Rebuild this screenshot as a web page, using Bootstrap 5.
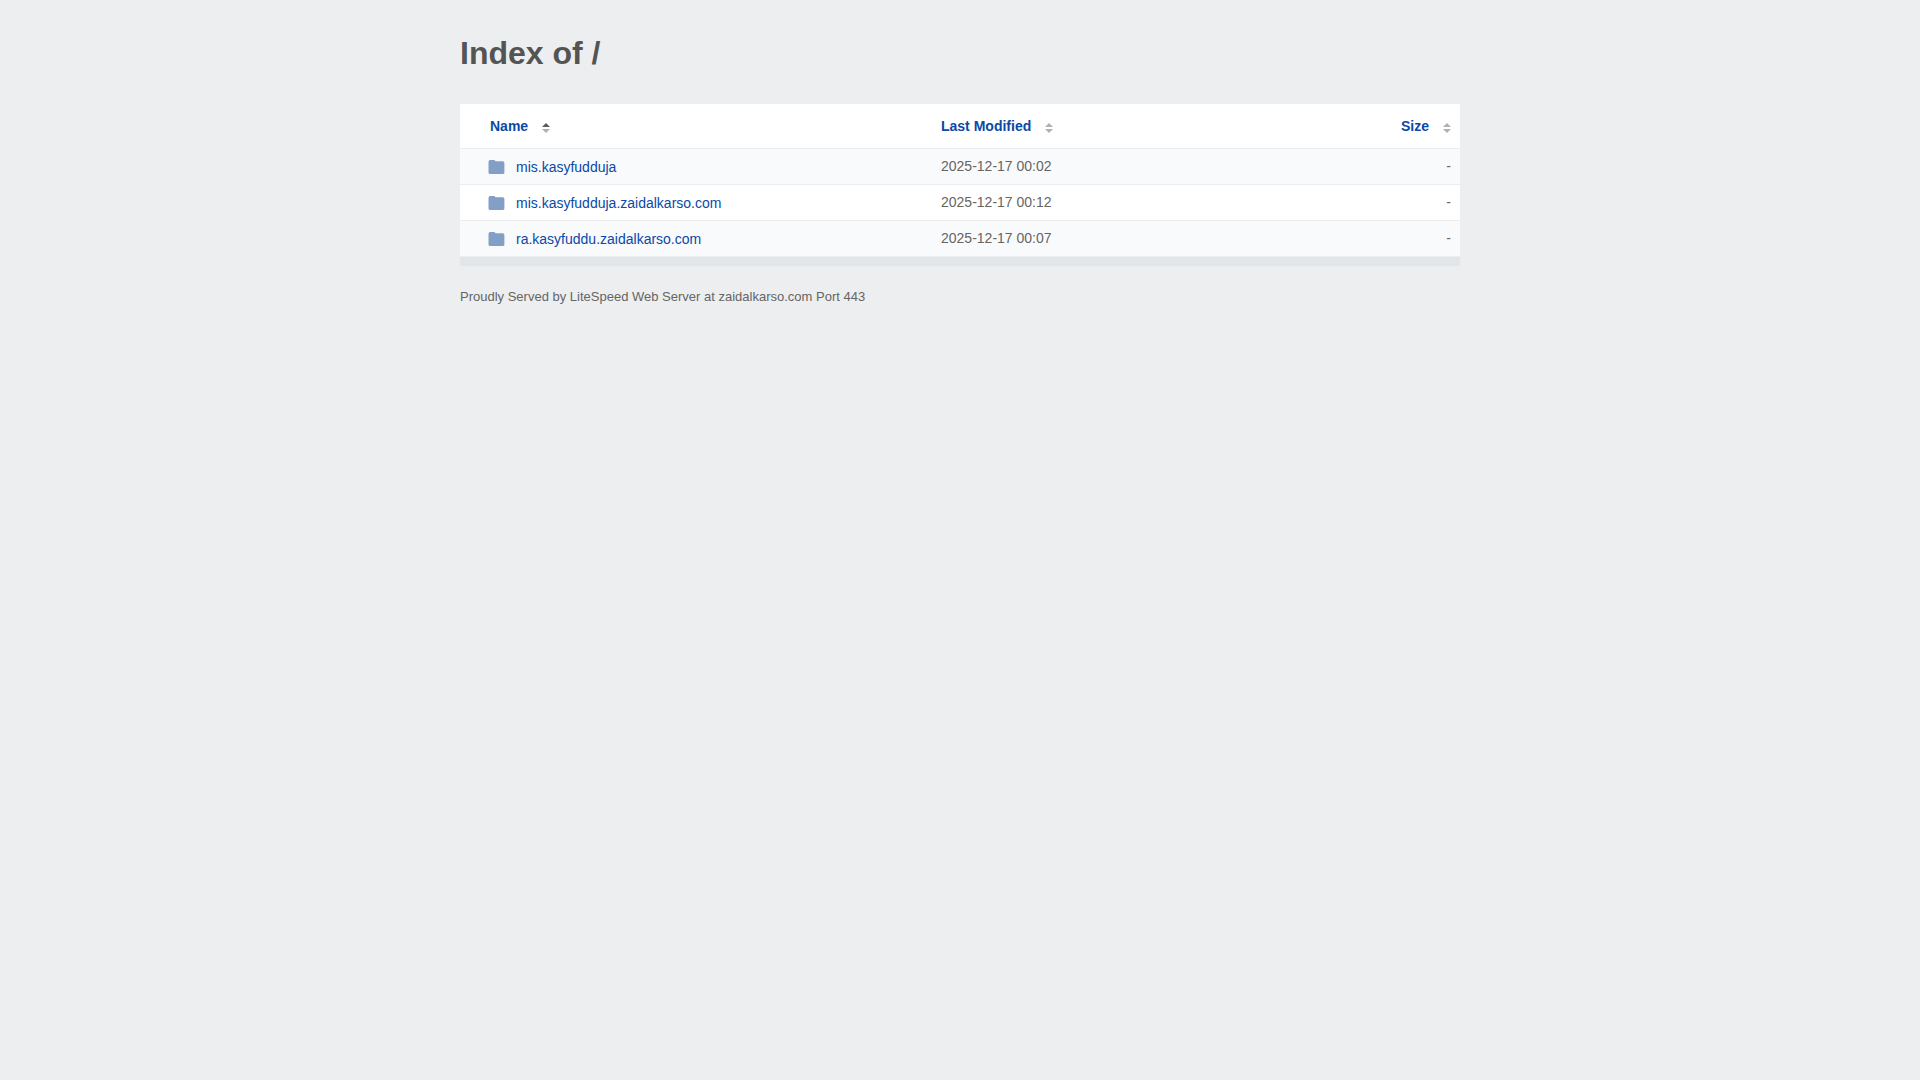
<!DOCTYPE html>
<html lang="en">
<head>
<meta charset="utf-8">
<meta name="viewport" content="width=device-width, initial-scale=1">
<title>Index of /</title>
<link href="https://cdn.jsdelivr.net/npm/bootstrap@5.3.0/dist/css/bootstrap.min.css" rel="stylesheet">
<style>
  body { background: #edeef0; color: #545454; font-family: "Liberation Sans", Arial, sans-serif; font-size: 14px; line-height: 20px; }
  .listing-page { max-width: 1000px; }
  h1 { font-size: 32px; line-height: 42px; padding-bottom: 6px; }
  .listing { --bs-table-bg: #fff; color: #656565; table-layout: fixed; }
  .listing > :not(caption) > * > * { padding: 7px 9px 8px; border-bottom: 1px solid #ebedef; color: #656565; vertical-align: middle; }
  .listing > thead > tr > th { padding-top: 12px; padding-bottom: 12px; }
  .listing > tbody > tr:nth-child(odd) > td { background: #f9fafc; }
  .listing > tbody > tr > :first-child { padding: 8px 9px 7px 28px; }
  .listing > thead > tr > :first-child { padding-left: 30px; }
  .listing .col-name { width: 47.2%; }
  .listing .col-size { width: 20%; }
  .listing a { color: #0a49a7; text-decoration: none; }
  .listing a:hover { text-decoration: underline; }
  .sort-icon { width: 8px; height: 10px; margin-left: 14px; margin-top: 3px; fill: #b0b0b0; }
  .sort-icon .active { fill: #5c5c5c; }
  .folder-icon { width: 17px; height: 16px; margin-right: 11px; fill: #849fc6; }
  .listing-end { height: 9px; background: #e3e6e8; }
  footer { font-size: 13px; line-height: 22px; color: #656565; }
</style>
<script src="https://cdn.jsdelivr.net/npm/bootstrap@5.3.0/dist/js/bootstrap.bundle.min.js"></script>
</head>
<body>
<svg class="d-none" aria-hidden="true">
  <symbol id="folder" viewBox="0 0 17 16"><path d="M2.2 1H5.8Q6.8 1 7.6 2.3H14.8Q16.4 2.3 16.4 3.9V13.4Q16.4 15 14.8 15H2.1Q.5 15 .5 13.4V2.8Q.5 1 2.2 1Z"/></symbol>
</svg>
<main class="listing-page mx-auto pt-4">
  <h1 class="fw-bold mt-2 mb-4">Index of /</h1>
  <table class="listing table mb-0">
    <thead>
      <tr>
        <th class="col-name" scope="col" aria-sort="ascending"><a class="d-inline-flex align-items-center" href="#name">Name<svg class="sort-icon" viewBox="0 0 8 10" aria-hidden="true"><path class="active" d="M4 0L8 4H0Z"/><path d="M0 6H8L4 10Z"/></svg></a></th>
        <th scope="col"><a class="d-inline-flex align-items-center" href="#modified">Last Modified<svg class="sort-icon" viewBox="0 0 8 10" aria-hidden="true"><path d="M4 0L8 4H0ZM0 6H8L4 10Z"/></svg></a></th>
        <th class="col-size text-end" scope="col"><a class="d-inline-flex align-items-center" href="#size">Size<svg class="sort-icon" viewBox="0 0 8 10" aria-hidden="true"><path d="M4 0L8 4H0ZM0 6H8L4 10Z"/></svg></a></th>
      </tr>
    </thead>
    <tbody>
      <tr><td><a class="d-flex align-items-center" href="#1"><svg class="folder-icon" aria-hidden="true"><use href="#folder"/></svg>mis.kasyfudduja</a></td><td>2025-12-17 00:02</td><td class="text-end">-</td></tr>
      <tr><td><a class="d-flex align-items-center" href="#2"><svg class="folder-icon" aria-hidden="true"><use href="#folder"/></svg>mis.kasyfudduja.zaidalkarso.com</a></td><td>2025-12-17 00:12</td><td class="text-end">-</td></tr>
      <tr><td><a class="d-flex align-items-center" href="#3"><svg class="folder-icon" aria-hidden="true"><use href="#folder"/></svg>ra.kasyfuddu.zaidalkarso.com</a></td><td>2025-12-17 00:07</td><td class="text-end">-</td></tr>
    </tbody>
  </table>
  <div class="listing-end"></div>
  <footer class="mt-3 pt-1">Proudly Served by LiteSpeed Web Server at zaidalkarso.com Port 443</footer>
</main>
</body>
</html>
